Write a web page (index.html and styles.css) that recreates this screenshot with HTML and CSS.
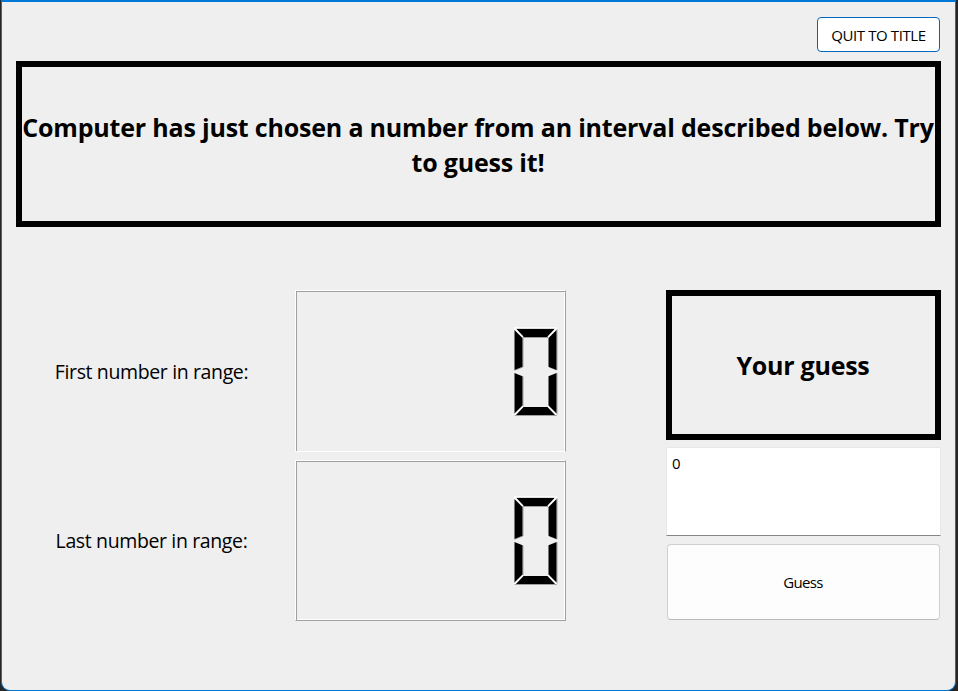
FILE: index.html
```html
<!DOCTYPE html>
<html lang="en">
<head>
<meta charset="utf-8">
<title>Guess the number</title>
<link rel="stylesheet" href="styles.css">
</head>
<body>
<main class="window">
  <header class="toolbar"><button class="btn quit">QUIT TO TITLE</button></header>
  <h1 class="panel banner"><span class="line first-line">Computer has just chosen a number from an interval described below. Try</span><span class="line second-line">to guess it!</span></h1>
  <div class="content">
    <section class="ranges">
      <div class="row">
        <span class="label label-first">First number in range:</span>
        <div class="lcd lcd-first">
          <svg class="digit" width="46" height="90" viewBox="0 0 46 90" role="img" aria-label="0">
            <path class="shade" d="M1.5 88.5H44M44 2V43L36 40M44 46V88M10 10.5H35M10 10V40L1.5 43.3M10 49.5V79.5"/>
            <g class="segments">
              <path d="M3 1.5H42L34.5 10H10.5Z"/>
              <path d="M1.5 3L9.5 11V39.7L1.5 43Z"/>
              <path d="M43.5 3L35.5 11V39.7L43.5 43Z"/>
              <path d="M1.5 46L9.5 49.3V79L1.5 87Z"/>
              <path d="M43.5 46L35.5 49.3V79L43.5 87Z"/>
              <path d="M10.5 80H34.5L42 88H3Z"/>
            </g>
            <path class="glint" d="M1 1L10 10M44 1L35 10M1 88L10 79M44 88L35 79M1 1H44"/>
          </svg>
        </div>
      </div>
      <div class="row">
        <span class="label label-last">Last number in range:</span>
        <div class="lcd lcd-last">
          <svg class="digit" width="46" height="90" viewBox="0 0 46 90" role="img" aria-label="0">
            <path class="shade" d="M1.5 88.5H44M44 2V43L36 40M44 46V88M10 10.5H35M10 10V40L1.5 43.3M10 49.5V79.5"/>
            <g class="segments">
              <path d="M3 1.5H42L34.5 10H10.5Z"/>
              <path d="M1.5 3L9.5 11V39.7L1.5 43Z"/>
              <path d="M43.5 3L35.5 11V39.7L43.5 43Z"/>
              <path d="M1.5 46L9.5 49.3V79L1.5 87Z"/>
              <path d="M43.5 46L35.5 49.3V79L43.5 87Z"/>
              <path d="M10.5 80H34.5L42 88H3Z"/>
            </g>
            <path class="glint" d="M1 1L10 10M44 1L35 10M1 88L10 79M44 88L35 79M1 1H44"/>
          </svg>
        </div>
      </div>
    </section>
    <section class="guess">
      <h2 class="panel guess-title"><span class="line">Your guess</span></h2>
      <div class="field"><span>0</span></div>
      <button class="btn submit">Guess</button>
    </section>
  </div>
</main>
</body>
</html>
```

FILE: styles.css
```css
* { box-sizing: border-box; }
html { background: #262626; }
body { margin: 0; padding: 0 2px 0 1px; height: 691px; overflow: hidden; font-family: "Open Sans", "Noto Sans", sans-serif; color: #000; }
.window { height: 691px; padding: 15px 14px 0; background: #efefef; border: 1px solid #0078d7; border-top-width: 2px; border-radius: 0 0 9px 9px; }
.toolbar { display: flex; justify-content: flex-end; height: 35px; padding-right: 1px; }
.btn { padding: 0; font-family: inherit; color: #000; white-space: nowrap; }
.quit { width: 123px; height: 35px; padding-top: 1px; background: #fff; border: 1px solid #0067c0; border-radius: 4px; font-size: 15px; letter-spacing: -0.4px; }
.panel { margin: 0; border: 6px solid #000; display: flex; flex-direction: column; align-items: center; justify-content: center; font-size: 25px; line-height: 35px; font-weight: 700; letter-spacing: -0.19px; }
.banner { width: 925px; height: 166px; margin-top: 9px; padding: 2px 1px 0 0; }
.line { white-space: nowrap; }
.content { display: flex; justify-content: space-between; width: 925px; margin-top: 63px; }
.ranges { display: grid; grid-template-rows: 162px 161px; row-gap: 8px; }
.row { display: grid; grid-template-columns: 271px 271px; column-gap: 8px; }
.label { align-self: center; justify-self: center; padding-top: 1px; font-size: 19.5px; line-height: 27px; letter-spacing: -0.37px; white-space: nowrap; }
.label-last { padding: 0 0 1px; }
.lcd { display: flex; justify-content: flex-end; padding: 36px 6px 0 0; border: 1px solid #fff; border-right-color: #a0a0a0; box-shadow: inset 1px 1px #a0a0a0, inset -1px 0 #fff; }
.lcd-last { padding-top: 35px; border-bottom-color: #a0a0a0; box-shadow: inset 1px 1px #a0a0a0, inset -1px -1px #fff; }
.digit { display: block; }
.shade { fill: none; stroke: #a0a0a0; stroke-width: 1; }
.segments { fill: #000; }
.glint { fill: none; stroke: #fff; stroke-width: 1.4; }
.guess { width: 275px; display: flex; flex-direction: column; }
.guess-title { height: 150px; padding: 1px 1px 0 0; letter-spacing: -0.25px; }
.field { height: 89px; margin: 7px 0 0; padding: 5px; background: #fff; border: 1px solid #e8e8e8; border-bottom-color: #868686; font-size: 15px; line-height: 20px; letter-spacing: -0.5px; }
.submit { height: 76px; margin: 8px 1px 0; padding-right: 1px; background: #fdfdfd; border: 1px solid #d0d0d0; border-bottom-color: #bababa; border-radius: 4px; font-size: 15px; letter-spacing: -0.7px; }
```
